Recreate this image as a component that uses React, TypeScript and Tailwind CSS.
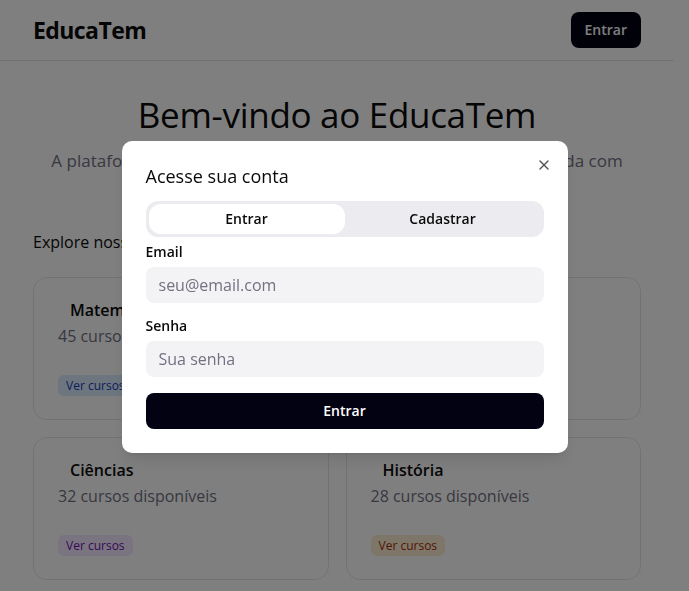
import { X } from 'lucide-react';

const areas = [
  { name: 'Matemática', count: 45, badge: 'bg-blue-100 text-blue-800' },
  { name: 'Português', count: 38, badge: 'bg-green-100 text-green-800' },
  { name: 'Ciências', count: 32, badge: 'bg-purple-100 text-purple-800' },
  { name: 'História', count: 28, badge: 'bg-orange-100 text-orange-800' }
];

export default function App() {
  return (
    <div className="h-[591px] overflow-hidden bg-white text-[#0a0a0a] font-['Open_Sans',sans-serif]">
      <div className="w-[674px]">
        <header className="flex items-center justify-between px-[33px] h-[61px] border-b border-black/10">
          <h1 className="text-[23px] font-bold tracking-tight">EducaTem</h1>
          <button className="h-9 px-[14px] rounded-[8px] bg-[#030213] text-white text-sm font-semibold">Entrar</button>
        </header>

        <main className="px-[33px]">
          <section className="pt-[34px] text-center">
            <h2 className="text-[35px] leading-10 font-medium tracking-[-0.3px]">Bem-vindo ao EducaTem</h2>
            <p className="mt-3 mx-auto max-w-[600px] text-[17px] leading-7 text-[#717182]">
              A plataforma de ensino online que oferece educação personalizada com professores qualificados e conteúdo de qualidade.
            </p>
          </section>

          <p className="mt-[27px] text-base leading-6">Explore nossas áreas de conhecimento</p>

          <div className="mt-[23px] grid grid-cols-2 gap-[17px]">
            {areas.map((a) => (
              <div key={a.name} className="h-[143px] rounded-[14px] border border-black/10 px-6 pt-6">
                <h3 className="pl-3 text-base leading-4 font-semibold">{a.name}</h3>
                <p className="mt-[6px] text-base leading-6 text-[#717182]">{a.count} cursos disponíveis</p>
                <span className={`mt-[27px] inline-flex h-[21px] items-center rounded-[6px] px-2 text-xs font-medium ${a.badge}`}>
                  Ver cursos
                </span>
              </div>
            ))}
          </div>
        </main>
      </div>

      <div className="fixed inset-0 bg-black/50" />

      <div className="fixed left-1/2 top-[calc(50%+1px)] -translate-x-1/2 -translate-y-1/2 w-[446px] rounded-[10px] bg-white p-6 shadow-lg">
        <button className="absolute top-4 right-4 opacity-70 text-[#0a0a0a]">
          <X className="w-4 h-4" />
        </button>
        <h2 className="text-lg leading-[22px] font-medium">Acesse sua conta</h2>

        <div className="mt-[14px] flex h-9 rounded-[12px] bg-[#ececf0] p-[3px]">
          <button className="flex-1 rounded-[12px] bg-white text-sm font-semibold">Entrar</button>
          <button className="flex-1 rounded-[12px] text-sm font-semibold">Cadastrar</button>
        </div>

        <form className="mt-2 space-y-4">
          <div className="flex flex-col gap-2">
            <label className="text-sm leading-none font-semibold">Email</label>
            <input
              type="email"
              placeholder="seu@email.com"
              className="h-9 w-full rounded-[8px] border border-transparent bg-[#f3f3f5] px-3 text-base placeholder:text-[#717182] outline-none"
            />
          </div>
          <div className="flex flex-col gap-2">
            <label className="text-sm leading-none font-semibold">Senha</label>
            <input
              type="password"
              placeholder="Sua senha"
              className="h-9 w-full rounded-[8px] border border-transparent bg-[#f3f3f5] px-3 text-base placeholder:text-[#717182] outline-none"
            />
          </div>
          <button type="button" className="h-9 w-full rounded-[8px] bg-[#030213] text-white text-sm font-semibold">
            Entrar
          </button>
        </form>
      </div>
    </div>
  );
}
